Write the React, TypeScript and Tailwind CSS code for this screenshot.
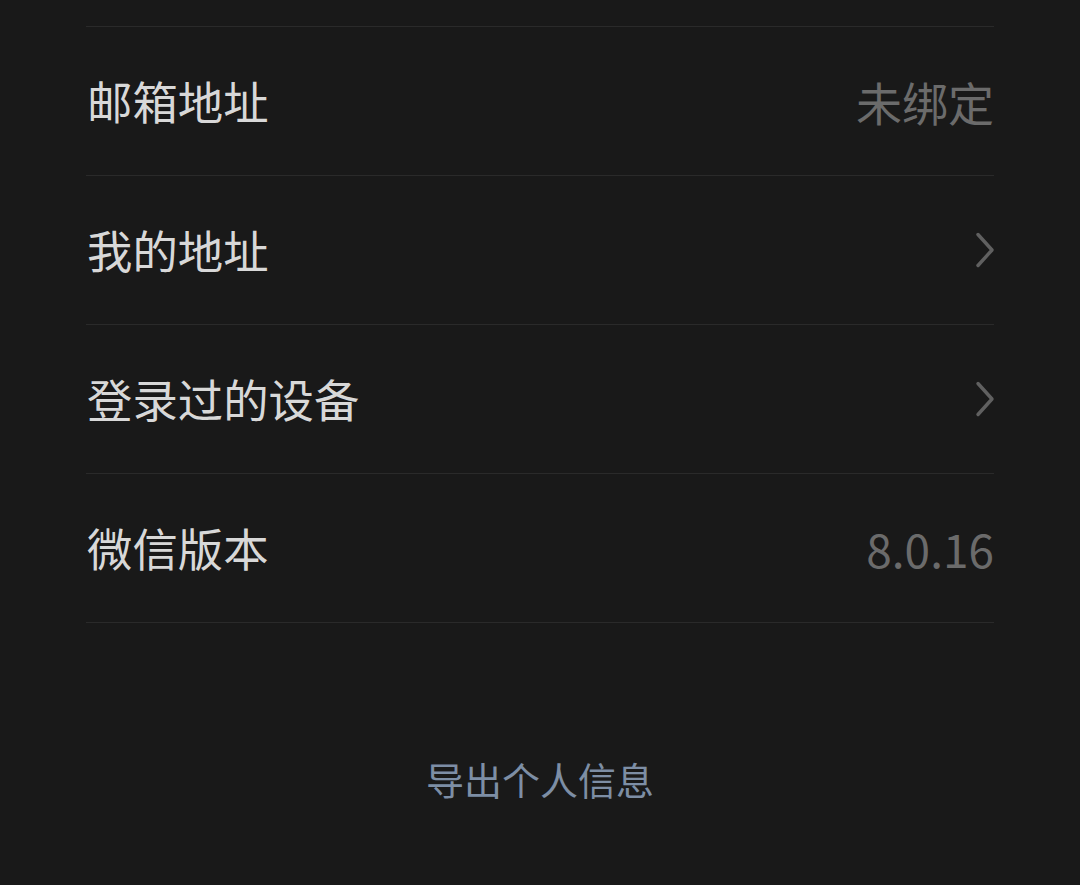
const rows = [
  { label: '邮箱地址', value: '未绑定' },
  { label: '我的地址', arrow: true },
  { label: '登录过的设备', arrow: true },
  { label: '微信版本', value: '8.0.16' },
]

function Chevron() {
  return (
    <svg width="20" height="36" viewBox="0 0 20 36" fill="none" className="mr-[-1px]">
      <path d="M3 2.5 L17 18 L3 33.5" stroke="#606060" strokeWidth="3.4" strokeLinecap="round" strokeLinejoin="round" />
    </svg>
  )
}

export default function App() {
  return (
    <div
      className="flex h-[885px] w-[1080px] flex-col overflow-hidden bg-[#191919]"
      style={{ fontFamily: '"Noto Sans CJK SC", "Noto Sans", sans-serif' }}
    >
      <div className="mx-[86px]">
        <div className="h-[27px] border-b border-[#2a2a2a]" />
        {rows.map(row => (
          <div
            className="flex h-[149px] items-center justify-between border-b border-[#2a2a2a] pl-[1px]"
            key={row.label}
          >
            <span className="text-[45.4px] leading-none text-[#d8d8d8]">{row.label}</span>
            {row.arrow ? (
              <Chevron />
            ) : (
              <span className="text-[46px] leading-none text-[#6b6b6b]">{row.value}</span>
            )}
          </div>
        ))}
      </div>
      <div className="mt-[137px] text-center text-[38px] leading-none text-[#7d8ea5]">导出个人信息</div>
    </div>
  )
}
